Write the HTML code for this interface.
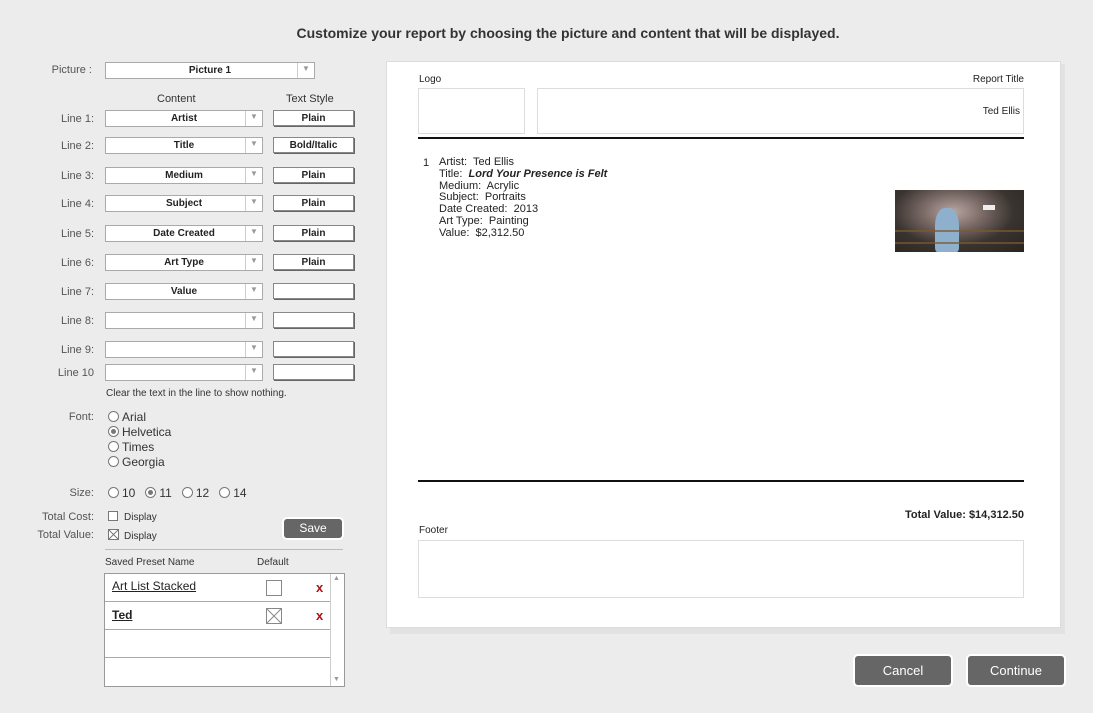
<!DOCTYPE html>
<html><head><style>
*{margin:0;padding:0;box-sizing:border-box}
body{width:1093px;height:713px;background:#ececec;font-family:"Liberation Sans",Arial,sans-serif;color:#222;position:relative;overflow:hidden}
.a{position:absolute;white-space:nowrap}
.lbl{font-size:11px;color:#555;text-align:right;width:80px;left:14px}
.sel{position:absolute;background:#fff;border:1px solid #aaa;height:17px;font-size:10px;font-weight:bold;text-align:center;line-height:16px}
.sel .ar{position:absolute;right:0;top:0;bottom:0;width:17px;border-left:1px solid #ccc;color:#999;font-size:8px;line-height:12px;font-weight:normal}
.btn{position:absolute;background:#fff;border:1px solid #888;box-shadow:1px 1px 0 #666;height:16px;width:81px;left:273px;font-size:10px;font-weight:bold;text-align:center;line-height:16px}
.rad{display:inline-block;width:11px;height:11px;border:1px solid #777;border-radius:50%;vertical-align:-1px;position:relative;margin-right:3px;background:#fff}
.rad.on:after{content:"";position:absolute;left:2px;top:2px;width:5px;height:5px;border-radius:50%;background:#777}
.opt{font-size:12px;color:#333;left:108px}
.cb{display:inline-block;width:10px;height:10px;border:1px solid #777;vertical-align:-1px;margin-right:6px;background:#fff}
.dk{position:absolute;background:#666;color:#fff;border-radius:3px;text-align:center;box-shadow:0 0 0 2px #fff}
</style></head><body>
<div class="a" style="left:0;width:1136px;top:25px;text-align:center;font-size:14px;font-weight:bold;color:#333">Customize your report by choosing the picture and content that will be displayed.</div>

<div class="a lbl" style="top:64px;left:12px">Picture :</div>
<div class="sel" style="left:105px;top:62px;width:210px">Picture 1<span class="ar">▼</span></div>
<div class="a" style="left:157px;top:93px;font-size:11px;color:#333">Content</div>
<div class="a" style="left:286px;top:93px;font-size:11px;color:#333">Text Style</div>

<div class="a lbl" style="top:113px">Line 1:</div><div class="sel" style="left:105px;top:110px;width:158px">Artist<span class="ar">▼</span></div><div class="btn" style="top:110px">Plain</div>
<div class="a lbl" style="top:140px">Line 2:</div><div class="sel" style="left:105px;top:137px;width:158px">Title<span class="ar">▼</span></div><div class="btn" style="top:137px">Bold/Italic</div>
<div class="a lbl" style="top:170px">Line 3:</div><div class="sel" style="left:105px;top:167px;width:158px">Medium<span class="ar">▼</span></div><div class="btn" style="top:167px">Plain</div>
<div class="a lbl" style="top:198px">Line 4:</div><div class="sel" style="left:105px;top:195px;width:158px">Subject<span class="ar">▼</span></div><div class="btn" style="top:195px">Plain</div>
<div class="a lbl" style="top:228px">Line 5:</div><div class="sel" style="left:105px;top:225px;width:158px">Date Created<span class="ar">▼</span></div><div class="btn" style="top:225px">Plain</div>
<div class="a lbl" style="top:257px">Line 6:</div><div class="sel" style="left:105px;top:254px;width:158px">Art Type<span class="ar">▼</span></div><div class="btn" style="top:254px">Plain</div>
<div class="a lbl" style="top:286px">Line 7:</div><div class="sel" style="left:105px;top:283px;width:158px">Value<span class="ar">▼</span></div><div class="btn" style="top:283px"></div>
<div class="a lbl" style="top:315px">Line 8:</div><div class="sel" style="left:105px;top:312px;width:158px"><span class="ar">▼</span></div><div class="btn" style="top:312px"></div>
<div class="a lbl" style="top:344px">Line 9:</div><div class="sel" style="left:105px;top:341px;width:158px"><span class="ar">▼</span></div><div class="btn" style="top:341px"></div>
<div class="a lbl" style="top:367px">Line 10</div><div class="sel" style="left:105px;top:364px;width:158px"><span class="ar">▼</span></div><div class="btn" style="top:364px"></div>
<div class="a" style="left:106px;top:388px;font-size:10px;color:#333">Clear the text in the line to show nothing.</div>

<div class="a lbl" style="top:411px">Font:</div>
<div class="a opt" style="top:410px"><span class="rad"></span>Arial</div>
<div class="a opt" style="top:425px"><span class="rad on"></span>Helvetica</div>
<div class="a opt" style="top:440px"><span class="rad"></span>Times</div>
<div class="a opt" style="top:455px"><span class="rad"></span>Georgia</div>
<div class="a lbl" style="top:487px">Size:</div>
<div class="a opt" style="top:486px"><span class="rad"></span>10 &nbsp;&nbsp;<span class="rad on"></span>11 &nbsp;&nbsp;<span class="rad"></span>12 &nbsp;&nbsp;<span class="rad"></span>14</div>
<div class="a lbl" style="top:511px">Total Cost:</div>
<div class="a" style="left:108px;top:511px;font-size:10px;color:#333"><span class="cb"></span>Display</div>
<div class="a lbl" style="top:529px">Total Value:</div>
<div class="a" style="left:108px;top:529px;font-size:10px;color:#333"><svg width="11" height="11" style="vertical-align:-1px;margin-right:5px"><rect x=".5" y=".5" width="10" height="10" fill="#fff" stroke="#777"/><path d="M1 1L10 10M10 1L1 10" stroke="#777"/></svg>Display</div>
<div class="dk" style="left:284px;top:519px;width:58px;height:19px;font-size:12px;line-height:19px">Save</div>
<div class="a" style="left:105px;top:549px;width:238px;height:1px;background:#bbb"></div>
<div class="a" style="left:105px;top:557px;font-size:10px;color:#333">Saved Preset Name</div>
<div class="a" style="left:257px;top:557px;font-size:10px;color:#333">Default</div>
<div class="a" style="left:104px;top:573px;width:241px;height:114px;background:#fff;border:1px solid #999"></div>
<div class="a" style="left:330px;top:574px;width:1px;height:112px;background:#ccc"></div>
<div class="a" style="left:333px;top:575px;font-size:7px;color:#999">▲</div>
<div class="a" style="left:333px;top:676px;font-size:7px;color:#999">▼</div>
<div class="a" style="left:105px;top:601px;width:225px;height:1px;background:#aaa"></div>
<div class="a" style="left:105px;top:629px;width:225px;height:1px;background:#aaa"></div>
<div class="a" style="left:105px;top:657px;width:225px;height:1px;background:#aaa"></div>
<div class="a" style="left:112px;top:579px;font-size:12px;text-decoration:underline;color:#222">Art List Stacked</div>
<div class="a" style="left:112px;top:608px;font-size:12px;font-weight:bold;text-decoration:underline;color:#222">Ted</div>
<div class="a" style="left:266px;top:580px;width:16px;height:16px;border:1px solid #888"></div>
<svg class="a" style="left:266px;top:608px" width="16" height="16"><rect x=".5" y=".5" width="15" height="15" fill="#fff" stroke="#888"/><path d="M1 1L15 15M15 1L1 15" stroke="#888"/></svg>
<div class="a" style="left:316px;top:580px;font-size:13px;font-weight:bold;color:#b01010">x</div>
<div class="a" style="left:316px;top:608px;font-size:13px;font-weight:bold;color:#b01010">x</div>

<div class="a" style="left:390px;top:64px;width:675px;height:570px;background:#e2e2e2"></div>
<div class="a" style="left:386px;top:61px;width:675px;height:567px;background:#fff;border:1px solid #ddd"></div>
<div class="a" style="left:419px;top:74px;font-size:10px;color:#222">Logo</div>
<div class="a" style="left:900px;width:124px;text-align:right;top:74px;font-size:10px;color:#222">Report Title</div>
<div class="a" style="left:418px;top:88px;width:107px;height:46px;border:1px solid #ddd"></div>
<div class="a" style="left:537px;top:88px;width:487px;height:46px;border:1px solid #ddd"></div>
<div class="a" style="left:900px;width:120px;text-align:right;top:106px;font-size:10px;color:#222">Ted Ellis</div>
<div class="a" style="left:418px;top:137px;width:606px;height:2px;background:#111"></div>
<div class="a" style="left:423px;top:157px;font-size:11px;color:#222">1</div>
<div class="a" style="left:439px;top:157px;font-size:11px;line-height:11.8px;color:#222">Artist:&nbsp; Ted Ellis<br>Title:&nbsp; <b><i>Lord Your Presence is Felt</i></b><br>Medium:&nbsp; Acrylic<br>Subject:&nbsp; Portraits<br>Date Created:&nbsp; 2013<br>Art Type:&nbsp; Painting<br>Value:&nbsp; $2,312.50</div>
<div class="a" style="left:895px;top:190px;width:129px;height:62px;background:radial-gradient(ellipse at 45% 35%,#b8a6a0 0%,#7a6a66 30%,#3a3430 60%,#2a2420 100%)">
<div class="a" style="left:40px;top:18px;width:24px;height:44px;background:#8fb0cc;border-radius:40% 40% 10% 10%"></div>
<div class="a" style="left:88px;top:15px;width:12px;height:5px;background:#eee"></div>
<div class="a" style="left:0;top:40px;width:129px;height:2px;background:#7a5a30;opacity:.7"></div>
<div class="a" style="left:0;top:52px;width:129px;height:2px;background:#7a5a30;opacity:.7"></div>
</div>
<div class="a" style="left:418px;top:480px;width:606px;height:2px;background:#111"></div>
<div class="a" style="left:800px;width:224px;text-align:right;top:509px;font-size:11px;font-weight:bold;color:#222">Total Value: $14,312.50</div>
<div class="a" style="left:419px;top:525px;font-size:10px;color:#222">Footer</div>
<div class="a" style="left:418px;top:540px;width:606px;height:58px;border:1px solid #ddd"></div>

<div class="dk" style="left:855px;top:656px;width:96px;height:29px;font-size:13px;line-height:29px">Cancel</div>
<div class="dk" style="left:968px;top:656px;width:96px;height:29px;font-size:13px;line-height:29px">Continue</div>
</body></html>
